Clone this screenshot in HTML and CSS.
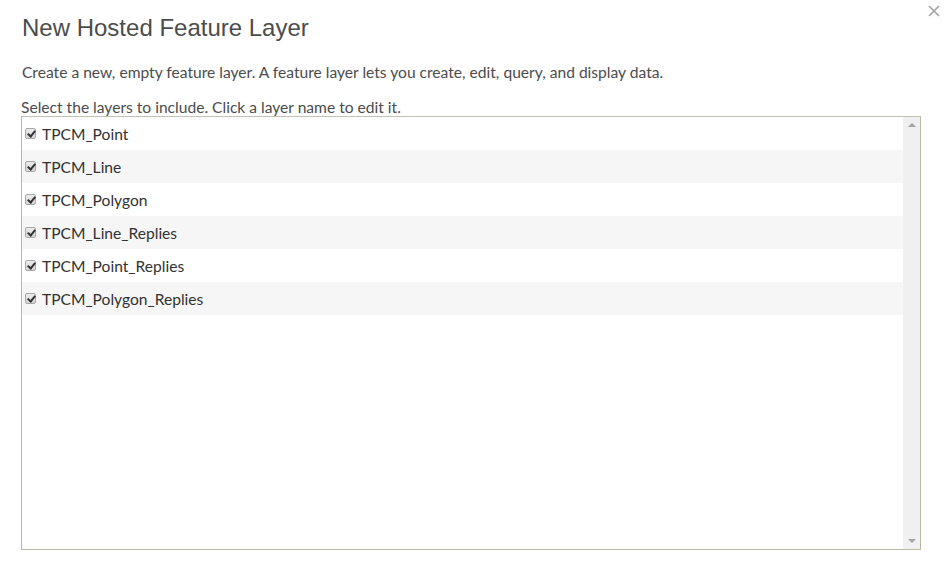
FILE: index.html
```html
<!DOCTYPE html>
<html lang="en">
<head>
    <meta charset="UTF-8">
    <title>New Hosted Feature Layer</title>
    <link rel="stylesheet" href="styles.css">
</head>
<body>
    <div class="dialog">
        <button class="close" title="Close">
            <svg width="12" height="12" viewBox="0 0 12 12"><path d="M1 1L11 11M11 1L1 11" stroke="#a3a3a3" stroke-width="1.6"/></svg>
        </button>
        <h1 class="title">New Hosted Feature Layer</h1>
        <p class="intro">Create a new, empty feature layer. A feature layer lets you create, edit, query, and display data.</p>
        <p class="hint">Select the layers to include. Click a layer name to edit it.</p>
        <div class="layer-box">
            <ul class="layers">
                <li><span class="check"></span><span class="name">TPCM_Point</span></li>
                <li><span class="check"></span><span class="name">TPCM_Line</span></li>
                <li><span class="check"></span><span class="name">TPCM_Polygon</span></li>
                <li><span class="check"></span><span class="name">TPCM_Line_Replies</span></li>
                <li><span class="check"></span><span class="name">TPCM_Point_Replies</span></li>
                <li><span class="check"></span><span class="name">TPCM_Polygon_Replies</span></li>
            </ul>
            <div class="scrollbar">
                <span class="arrow up"></span>
                <span class="arrow down"></span>
            </div>
        </div>
    </div>
</body>
</html>
```

FILE: styles.css
```css
body {
    margin: 0;
    background-color: #ffffff;
    font-family: Lato, 'Open Sans', sans-serif;
    color: #4c4c4c;
}
.dialog {
    position: relative;
    padding: 12px 25px 0 21px;
}
.close {
    position: absolute;
    top: 5px;
    right: 6px;
    padding: 0;
    border: none;
    background: none;
    cursor: pointer;
}
.title {
    margin: 0 0 0 1px;
    font-family: 'Liberation Sans', Arial, sans-serif;
    font-weight: normal;
    font-size: 24px;
    line-height: 32px;
    color: #4c4c4c;
}
.intro {
    margin: 18px 0 0 1px;
    font-size: 15.6px;
    line-height: 20px;
}
.hint {
    margin: 15px 0 0 0;
    font-size: 15.6px;
    line-height: 20px;
}
.layer-box {
    display: flex;
    height: 432px;
    margin-top: -1px;
    border: 1px solid #b9b9a3;
    border-top-color: #c3c3b3;
}
.layers {
    flex: 1;
    margin: 0;
    padding: 0;
    list-style: none;
}
.layers li {
    display: flex;
    align-items: center;
    height: 33px;
    padding-left: 3px;
    font-size: 15.6px;
    color: #323232;
}
.layers li:nth-child(even) {
    background-color: #f6f6f6;
}
.check {
    position: relative;
    width: 11px;
    height: 11px;
    margin-right: 6px;
    box-sizing: border-box;
    border: 1px solid #a8a8a8;
    border-radius: 2px;
    background: linear-gradient(#ececec, #d6d6d6);
}
.check::after {
    content: "";
    position: absolute;
    left: 3px;
    top: 0px;
    width: 3px;
    height: 6px;
    border: solid #333;
    border-width: 0 2px 2px 0;
    transform: rotate(40deg);
}
.scrollbar {
    position: relative;
    width: 17px;
    background-color: #f0f0f0;
}
.arrow {
    position: absolute;
    left: 5px;
    width: 0;
    height: 0;
    border-left: 4px solid transparent;
    border-right: 4px solid transparent;
}
.arrow.up {
    top: 6px;
    border-bottom: 4px solid #a3a3a3;
}
.arrow.down {
    bottom: 6px;
    border-top: 4px solid #a3a3a3;
}
```
